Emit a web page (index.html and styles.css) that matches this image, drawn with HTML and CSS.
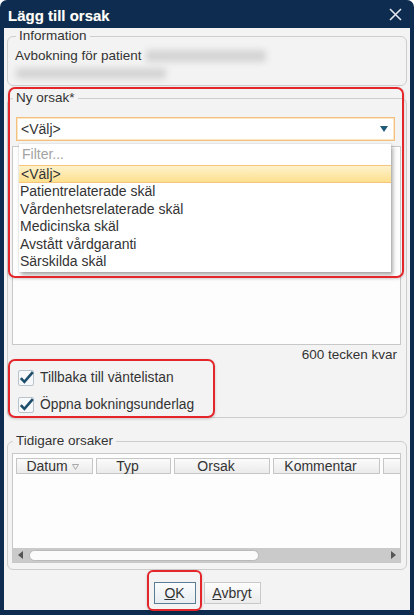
FILE: index.html
```html
<!DOCTYPE html>
<html lang="sv">
<head>
<meta charset="utf-8">
<title>Lägg till orsak</title>
<link rel="stylesheet" href="styles.css">
</head>
<body>
<div class="window">
  <div class="titlebar">
    <span class="title">Lägg till orsak</span>
    <svg class="close" width="13" height="13" viewBox="0 0 13 13"><path d="M1 1 L12 12 M12 1 L1 12" stroke="#e4e8ee" stroke-width="1.6" fill="none"/></svg>
  </div>
  <div class="client">
    <fieldset class="group info">
      <legend>Information</legend>
      <div class="line">Avbokning för patient <span class="blur blur-name"></span></div>
      <div class="line"><span class="blur blur-id"></span></div>
    </fieldset>

    <fieldset class="group reason">
      <legend>Ny orsak*</legend>
      <div class="select">
        <span>&lt;Välj&gt;</span>
        <svg class="arrow" width="8" height="6" viewBox="0 0 8 6"><path d="M0 0 H8 L4 6 Z" fill="#1f5a76"/></svg>
      </div>
      <div class="textarea-wrap">
        <div class="textarea"></div>
        <div class="popup">
          <div class="filter">Filter...</div>
          <div class="opt selected">&lt;Välj&gt;</div>
          <div class="opt">Patientrelaterade skäl</div>
          <div class="opt">Vårdenhetsrelaterade skäl</div>
          <div class="opt">Medicinska skäl</div>
          <div class="opt">Avstått vårdgaranti</div>
          <div class="opt">Särskilda skäl</div>
        </div>
      </div>
      <div class="counter">600 tecken kvar</div>
      <label class="check">
        <svg class="box" width="16" height="16" viewBox="0 0 16 16"><rect x="0.5" y="0.5" width="15" height="15" rx="1.5" fill="#f7f8f9" stroke="#b8c3cb"/><path d="M2.8 8.2 L6.4 11.8 L14.8 2.2" stroke="#1d4e6c" stroke-width="2.6" fill="none"/></svg>
        <span>Tillbaka till väntelistan</span>
      </label>
      <label class="check">
        <svg class="box" width="16" height="16" viewBox="0 0 16 16"><rect x="0.5" y="0.5" width="15" height="15" rx="1.5" fill="#f7f8f9" stroke="#b8c3cb"/><path d="M2.8 8.2 L6.4 11.8 L14.8 2.2" stroke="#1d4e6c" stroke-width="2.6" fill="none"/></svg>
        <span>Öppna bokningsunderlag</span>
      </label>
    </fieldset>

    <fieldset class="group history">
      <legend>Tidigare orsaker</legend>
      <div class="grid">
        <div class="grid-head">
          <div class="hcell c-datum">Datum <svg class="sorticon" width="7" height="6" viewBox="0 0 7 6"><path d="M0.5 0.5 H6.5 L3.5 5.5 Z" fill="none" stroke="#a8a8a8"/></svg></div>
          <div class="hcell c-typ">Typ</div>
          <div class="hcell c-orsak">Orsak</div>
          <div class="hcell c-komm">Kommentar</div>
          <div class="hcell c-extra"></div>
        </div>
        <div class="grid-body"></div>
        <div class="hscroll">
          <svg class="sarrow" width="5" height="8" viewBox="0 0 5 8"><path d="M5 0 V8 L0 4 Z" fill="#555"/></svg>
          <div class="thumb"></div>
          <svg class="sarrow right" width="5" height="8" viewBox="0 0 5 8"><path d="M0 0 V8 L5 4 Z" fill="#555"/></svg>
        </div>
      </div>
    </fieldset>

    <div class="buttons">
      <button class="btn ok"><u>O</u>K</button>
      <button class="btn cancel"><u>A</u>vbryt</button>
    </div>
  </div>

  <div class="mark mark-reason"></div>
  <div class="mark mark-checks"></div>
  <div class="mark mark-ok"></div>
</div>
</body>
</html>
```

FILE: styles.css
```css
* { box-sizing: border-box; }
html, body { margin: 0; background: #ffffff; }
body {
  font-family: "Liberation Sans", Arial, sans-serif;
  font-size: 13.5px;
  color: #333333;
}

.window {
  position: relative;
  width: 414px;
  height: 615px;
  background: #0d2c4f;
  border-radius: 7px 7px 0 0;
  display: flex;
  flex-direction: column;
  padding: 0 4px 5px 4px;
}

.titlebar {
  height: 28px;
  flex: none;
  display: flex;
  align-items: center;
  justify-content: space-between;
  padding: 3px 8px 0 4px;
}
.title {
  font-weight: bold;
  font-size: 15px;
  color: #ffffff;
  text-shadow: 0 0 1px rgba(255, 220, 150, 0.35);
}
.close { display: block; margin-top: -3px; }

.client {
  flex: 1;
  background: #f3f3f3;
  display: flex;
  flex-direction: column;
  padding: 0 3px;
}

fieldset.group {
  margin: 0;
  min-width: 0;
  border: 1px solid #cdcdcd;
  border-radius: 6px;
}
fieldset.group legend {
  padding: 0 3px;
  margin-left: 1px;
  line-height: 14px;
  color: #333;
}

/* Information */
.info {
  margin-top: 1px !important;
  padding: 5px 7px 5px 7px;
}
.line {
  height: 16px;
  line-height: 16px;
  white-space: nowrap;
  display: flex;
  align-items: center;
}
.blur {
  display: inline-block;
  background: #d4d4d4;
  filter: blur(3px);
  border-radius: 3px;
}
.blur-name { width: 120px; height: 12px; margin-left: 4px; }
.blur-id { width: 150px; height: 11px; margin-left: 1px; margin-top: 2px; }

/* Ny orsak */
.reason {
  margin-top: 5px !important;
  padding: 12px 4px 0 4px;
}
.reason legend { margin-left: 2px; }

.select {
  height: 24px;
  margin: 0 7px 5px 4px;
  background: #ffffff;
  border: 1px solid #f4c07e;
  box-shadow: inset 0 0 0 1px #fde6c6;
  display: flex;
  align-items: center;
  justify-content: space-between;
  padding: 0 6px 0 4px;
  font-size: 14px;
}
.arrow { display: block; }

.textarea-wrap {
  position: relative;
  height: 199px;
  margin-right: 1px;
}
.textarea {
  height: 100%;
  background: #fdfdfd;
  border: 1px solid #c8c8c8;
}
.popup {
  position: absolute;
  left: 7px;
  top: -2px;
  width: 372px;
  height: 128px;
  background: #ffffff;
  box-shadow: 0 0 0 1px rgba(0, 0, 0, 0.04), 2px 3px 4px rgba(0, 0, 0, 0.32);
  font-size: 14px;
}
.filter {
  height: 21px;
  line-height: 21px;
  padding-left: 3px;
  color: #a3a3a3;
}
.opt {
  height: 17.5px;
  line-height: 17.5px;
  padding-left: 1px;
  white-space: nowrap;
}
.opt.selected {
  height: 18px;
  line-height: 16px;
  padding-left: 2px;
  background: linear-gradient(#fef2cc, #fde08e);
  border-top: 1px solid #f7c47b;
  border-bottom: 1px solid #f7c47b;
}

.counter {
  margin-top: 2px;
  height: 16px;
  line-height: 16px;
  text-align: right;
  padding-right: 5px;
}

.check {
  height: 25px;
  margin-top: 2px;
  display: flex;
  align-items: center;
  gap: 6px;
  padding-left: 6px;
  font-size: 13.8px;
}
.box { display: block; overflow: visible; }

/* Tidigare orsaker */
.history {
  margin-top: 16px !important;
  padding: 5px 4px 6px 4px;
}
.grid {
  height: 110px;
  margin-right: 1px;
  background: #fdfdfd;
  border: 1px solid #c8c8c8;
  display: flex;
  flex-direction: column;
  overflow: hidden;
}
.grid-head {
  display: flex;
  gap: 3px;
  padding: 4px 0 0 3px;
  flex: none;
  overflow: hidden;
}
.hcell {
  flex: none;
  height: 16px;
  border: 1px solid #c6c6c6;
  background: linear-gradient(#fbfbfb, #ebebeb);
  display: flex;
  align-items: center;
  justify-content: center;
  padding-right: 12px;
  line-height: 14px;
  white-space: nowrap;
  font-size: 14px;
}
.c-datum { width: 77px; padding-right: 4px; gap: 4px; }
.c-typ { width: 75px; }
.c-orsak { width: 96px; }
.c-komm { width: 107px; }
.c-extra { width: 40px; }
.sorticon { display: block; margin-top: 2px; }

.grid-body { flex: 1; }
.hscroll {
  height: 14px;
  flex: none;
  background: #cacaca;
  display: flex;
  align-items: center;
  padding: 0 4px 0 5px;
}
.sarrow { display: block; }
.sarrow.right { margin-left: auto; }
.thumb {
  width: 230px;
  height: 11px;
  margin-left: 6px;
  background: #fbfbfb;
  border: 1px solid #b9b9b9;
  border-radius: 6px;
}

/* Buttons */
.buttons {
  margin-top: 12px;
  display: flex;
  justify-content: center;
  gap: 8px;
}
.btn {
  height: 22px;
  font-family: "Liberation Sans", Arial, sans-serif;
  font-size: 14px;
  color: #333;
  padding: 0;
  background: linear-gradient(#fdfdfd, #ebebeb);
  border: 1px solid #c9c9c9;
  border-radius: 0;
}
.btn.ok {
  width: 42px;
  border-color: #5a7d96;
  background: linear-gradient(#fbfcfd, #e7edf1);
}
.btn.cancel { width: 57px; }

/* Annotation marks */
.mark {
  position: absolute;
  border: 2px solid #e4262b;
  border-radius: 7px;
  box-shadow: 0 1px 3px rgba(0, 0, 0, 0.18);
  pointer-events: none;
}
.mark-reason { left: 8px; top: 87px; width: 396px; height: 191px; }
.mark-checks { left: 8px; top: 359px; width: 207px; height: 59px; }
.mark-ok { left: 147px; top: 570px; width: 55px; height: 41px; border-radius: 6px; }
```
